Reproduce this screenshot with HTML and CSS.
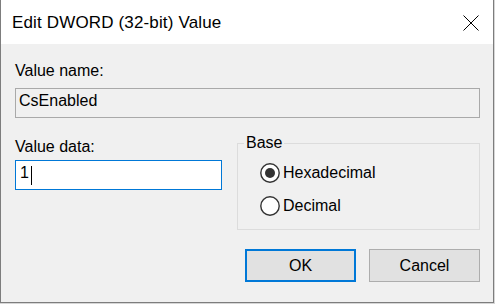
FILE: index.html
```
<!DOCTYPE html>
<html lang="en">
<head>
    <meta charset="UTF-8">
    <meta name="viewport" content="width=device-width, initial-scale=1.0">
    <title>Edit DWORD (32-bit) Value</title>
    <link rel="stylesheet" href="styles.css">
</head>
<body>
    <div class="window">
        <!-- Title bar -->
        <div class="titlebar">
            <span class="title">Edit DWORD (32-bit) Value</span>
            <svg class="close" width="16" height="16" viewBox="0 0 16 16">
                <path d="M0.5 0.5 L15.5 15.5 M15.5 0.5 L0.5 15.5" stroke="#000" stroke-width="1" fill="none"/>
            </svg>
        </div>

        <div class="dialog-body">
            <div class="label">Value name:</div>
            <div class="field field-readonly">CsEnabled</div>

            <div class="row">
                <div class="data-col">
                    <div class="label">Value data:</div>
                    <div class="field field-focus">1<span class="caret"></span></div>
                </div>

                <fieldset class="base">
                    <legend>Base</legend>
                    <div class="radio-list">
                        <div class="radio-row">
                            <svg class="radio" width="20" height="20" viewBox="0 0 20 20">
                                <circle cx="10" cy="10" r="9.2" fill="#fff" stroke="#333" stroke-width="1.4"/>
                                <circle cx="10" cy="10" r="5" fill="#333"/>
                            </svg>
                            <span>Hexadecimal</span>
                        </div>
                        <div class="radio-row">
                            <svg class="radio" width="20" height="20" viewBox="0 0 20 20">
                                <circle cx="10" cy="10" r="9.2" fill="#fff" stroke="#333" stroke-width="1.4"/>
                            </svg>
                            <span>Decimal</span>
                        </div>
                    </div>
                </fieldset>
            </div>

            <div class="buttons">
                <button class="btn btn-default">OK</button>
                <button class="btn">Cancel</button>
            </div>
        </div>
    </div>
</body>
</html>
```

FILE: styles.css
```
* {
    margin: 0;
    padding: 0;
    box-sizing: border-box;
}

body {
    font-family: 'Liberation Sans', Arial, sans-serif;
    font-size: 16px;
    color: #000;
    background: #d6d6d6;
}

.window {
    width: 494px;
    height: 303px;
    display: flex;
    flex-direction: column;
    border: 1px solid #7d7d7d;
    border-top: none;
    background: #f0f0f0;
}

.titlebar {
    height: 44px;
    flex-shrink: 0;
    background: #fff;
    display: flex;
    align-items: center;
    justify-content: space-between;
    padding-left: 11px;
    padding-right: 14px;
}

.title {
    font-size: 17px;
    line-height: 20px;
    padding-top: 2px;
    letter-spacing: 0.15px;
}

.close {
    display: block;
    margin-top: 1px;
}

.dialog-body {
    flex: 1;
    padding: 18px 13px 0 14px;
}

.label {
    line-height: 18px;
}

.field {
    height: 30px;
    margin-top: 8px;
    border: 1px solid #a9a9a9;
    padding: 0 3px 4px;
    line-height: 24px;
    white-space: nowrap;
}

.field-readonly {
    background: #f0f0f0;
}

.field-focus {
    background: #fff;
    border-color: #0078d7;
    margin-top: 4px;
    padding-left: 4px;
    display: flex;
    align-items: center;
}

.caret {
    display: inline-block;
    width: 1px;
    height: 19px;
    background: #000;
    margin-left: 2px;
    margin-bottom: -4px;
}

.row {
    display: flex;
    align-items: flex-start;
    gap: 15px;
    margin-top: 16px;
}

.data-col {
    width: 207px;
    padding-top: 4px;
}

.base {
    width: 243px;
    height: 96px;
    border: 1px solid #dcdcdc;
    padding: 0 0 0 6px;
    margin: 0;
}

.base legend {
    padding: 0 2px;
    line-height: 18px;
}

.radio-list {
    margin-top: 4px;
    margin-left: 16px;
}

.radio-row {
    height: 33px;
    display: flex;
    align-items: center;
    gap: 3px;
    line-height: 18px;
}

.radio {
    display: block;
}

.buttons {
    display: flex;
    justify-content: flex-end;
    gap: 13px;
    margin-top: 19px;
}

.btn {
    width: 111px;
    height: 33px;
    font-family: 'Liberation Sans', Arial, sans-serif;
    font-size: 16px;
    color: #000;
    background: #e1e1e1;
    border: 1px solid #adadad;
}

.btn-default {
    border: 2px solid #0078d7;
}
```
